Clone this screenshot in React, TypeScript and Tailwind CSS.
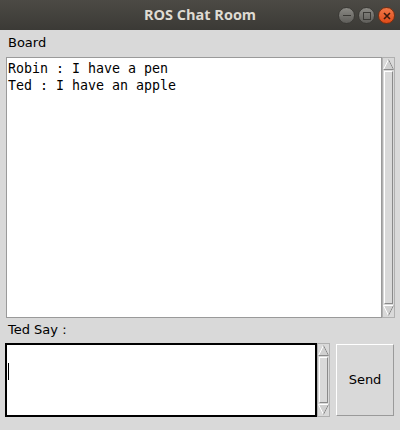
import React from "react";

function ScrollBar({ className }: { className?: string }) {
  return (
    <div className={"flex flex-col w-[13px] bg-[#d9d9d9] border border-[#b0b0b0] " + (className || "")}>
      <div className="h-[13px] flex items-center justify-center">
        <svg width="11" height="11" viewBox="0 0 11 11">
          <polygon points="5.5,0.5 10.5,10.5 0.5,10.5" fill="#d0d0d0" stroke="#ffffff" strokeWidth="1" />
          <line x1="0.5" y1="10.5" x2="10.5" y2="10.5" stroke="#8a8a8a" />
          <line x1="5.5" y1="0.5" x2="10.5" y2="10.5" stroke="#8a8a8a" />
        </svg>
      </div>
      <div className="flex-1 border-t border-l border-white border-r border-b border-r-[#8a8a8a] border-b-[#8a8a8a] mx-[1px] bg-[#d9d9d9]" />
      <div className="h-[13px] flex items-center justify-center">
        <svg width="11" height="11" viewBox="0 0 11 11">
          <polygon points="0.5,0.5 10.5,0.5 5.5,10.5" fill="#d0d0d0" stroke="#ffffff" strokeWidth="1" />
          <line x1="10.5" y1="0.5" x2="5.5" y2="10.5" stroke="#8a8a8a" />
        </svg>
      </div>
    </div>
  );
}

export default function App() {
  const sans = { fontFamily: '"DejaVu Sans", sans-serif' };
  const mono = { fontFamily: '"DejaVu Sans Mono", monospace' };
  return (
    <div className="w-[400px] h-[430px] flex flex-col bg-[#d9d9d9] overflow-hidden">
      {/* Title bar */}
      <div className="relative h-[30px] flex items-center justify-center bg-gradient-to-b from-[#4c4a45] to-[#3b3a36]">
        <span
          className="text-[14.5px] font-bold text-[#dfdbd2]"
          style={{ fontFamily: '"Open Sans", "Noto Sans", sans-serif' }}
        >
          ROS Chat Room
        </span>
        <div className="absolute right-[5px] top-[7px] flex gap-[3px]">
          <div className="w-[17px] h-[17px] rounded-full bg-gradient-to-b from-[#8a8984] to-[#5f5e5a] border border-[#3a3935] flex items-center justify-center">
            <div className="w-[8px] h-[1.5px] bg-[#3a3935]" />
          </div>
          <div className="w-[17px] h-[17px] rounded-full bg-gradient-to-b from-[#8a8984] to-[#5f5e5a] border border-[#3a3935] flex items-center justify-center">
            <div className="w-[8px] h-[8px] border-[1.5px] border-[#3a3935]" />
          </div>
          <div className="w-[17px] h-[17px] rounded-full bg-gradient-to-b from-[#f07746] to-[#df4a16] border border-[#7a2e10] flex items-center justify-center">
            <svg width="8" height="8" viewBox="0 0 8 8">
              <path d="M1 1 L7 7 M7 1 L1 7" stroke="#3a1a0d" strokeWidth="1.6" />
            </svg>
          </div>
        </div>
      </div>

      {/* Board label */}
      <div className="h-[27px] pl-[8px] pt-[5px] text-[13px] leading-[16px] text-black" style={sans}>
        Board
      </div>

      {/* Board area */}
      <div className="flex ml-[6px] mr-[5px] h-[261px]">
        <div className="flex-1 bg-white border border-[#9a9a9a] pl-[1px] pt-[2px] text-[13.3px] leading-[17px] text-black" style={mono}>
          <div>Robin : I have a pen</div>
          <div>Ted : I have an apple</div>
        </div>
        <ScrollBar />
      </div>

      {/* Ted Say label */}
      <div className="h-[25px] pl-[8px] pt-[4px] text-[13px] leading-[16px] text-black" style={sans}>
        Ted Say :
      </div>

      {/* Input row */}
      <div className="flex ml-[5px] mr-[6px] h-[74px]">
        <div className="w-[312px] bg-white border-2 border-black relative">
          <div className="absolute left-[1px] top-[18px] w-[1px] h-[17px] bg-black" />
        </div>
        <ScrollBar />
        <div className="w-[6px]" />
        <div
          className="flex-1 my-[1px] flex items-center justify-center bg-[#d9d9d9] border border-t-white border-l-white border-r-[#9a9a9a] border-b-[#9a9a9a] text-[13px] text-black"
          style={sans}
        >
          Send
        </div>
      </div>
    </div>
  );
}
